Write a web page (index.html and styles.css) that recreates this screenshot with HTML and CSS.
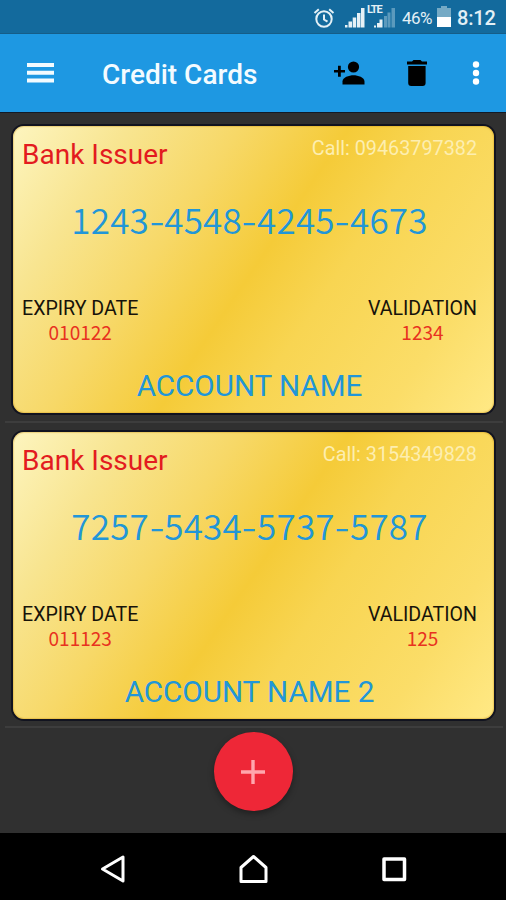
FILE: index.html
```html
<!DOCTYPE html>
<html lang="en">
<head>
    <meta charset="UTF-8">
    <meta name="viewport" content="width=device-width, initial-scale=1.0">
    <title>Credit Cards</title>
    <link rel="stylesheet" href="styles.css">
</head>
<body>
    <div class="status-bar">
        <svg class="alarm-icon" width="22" height="22" viewBox="0 0 22 22" fill="none" stroke="#e3f0f6" stroke-width="2">
            <circle cx="11" cy="12" r="7.7"/>
            <path d="M11 7.5v5l3.5 2.2M1.5 6l4.3-3.8M20.500 6l-4.300-3.800"/>
        </svg>
        <svg class="signal-icon" width="20" height="21" viewBox="0 0 20 21" fill="#e6f1f6">
            <path d="M0 18h2.500v2.500H0zM3.500 14.500H7v6H3.500zM7.700 10.500h3.500v10H7.700zM12 6h3.500v14.500H12zM16 1h3.500v19.500H16z"/>
        </svg>
        <div class="lte">
            <svg width="21" height="20" viewBox="0 0 21 20">
                <path fill="#e6f1f6" d="M0 17.500h2v2H0zM3 15h2.500v4.500H3zM5.500 11.500h3v8h-3z"/>
                <path fill="#5b9abd" d="M10 8h3v11.500h-3zM13.500 4.500h3v15h-3zM17.500 0H21v19.500h-3.500z"/>
            </svg>
            <span class="lte-label">LTE</span>
        </div>
        <span class="battery-text">46%</span>
        <svg class="battery-icon" width="14" height="21" viewBox="0 0 14 21">
            <path fill="#75aac5" d="M4 0h6v2h4v9H0V2h4z"/>
            <path fill="#fff" d="M0 11h14v10H0z"/>
        </svg>
        <span class="clock">8:12</span>
    </div>

    <header class="toolbar">
        <svg class="menu-icon" width="27" height="20" viewBox="0 0 27 20" fill="#f3fbff">
            <path d="M0 0h27v4H0zM0 7.800h27v4H0zM0 15.500h27v4H0z"/>
        </svg>
        <h1 class="title">Credit Cards</h1>
        <svg class="add-person-icon" width="31" height="24" viewBox="0 0 31 24">
            <circle cx="19.500" cy="6" r="5.600"/>
            <path d="M8.500 23.500v-3c0-4 6.500-6.200 11-6.200s11 2.200 11 6.200v3z"/>
            <path d="M4 4.800h2.800v4.100H11v2.700H6.800v4.200H4v-4.200H0V8.900h4z"/>
        </svg>
        <svg class="trash-icon" width="20" height="26" viewBox="0 0 20 26">
            <path d="M0 1.500h5L6.500 0h7L15 1.500h5v3H0zM1.200 6h17.400v17q0 3-3 3H4.200q-3 0-3-3z"/>
        </svg>
        <svg class="more-icon" width="8" height="24" viewBox="0 0 8 24" fill="#fff">
            <circle cx="4" cy="3.500" r="3.200"/>
            <circle cx="4" cy="12" r="3.200"/>
            <circle cx="4" cy="20.500" r="3.200"/>
        </svg>
    </header>

    <main class="card-list">
        <div class="list-item">
            <div class="credit-card">
                <div class="card-header">
                    <span class="issuer">Bank Issuer</span>
                    <span class="call">Call: 09463797382</span>
                </div>
                <div class="card-number">1243<i>-</i>4548<i>-</i>4245<i>-</i>4673</div>
                <div class="card-details">
                    <div class="detail">
                        <span class="label">EXPIRY DATE</span>
                        <span class="code">010122</span>
                    </div>
                    <div class="detail">
                        <span class="label">VALIDATION</span>
                        <span class="code">1234</span>
                    </div>
                </div>
                <div class="account-name">ACCOUNT NAME</div>
            </div>
        </div>

        <div class="list-item">
            <div class="credit-card">
                <div class="card-header">
                    <span class="issuer">Bank Issuer</span>
                    <span class="call">Call: 3154349828</span>
                </div>
                <div class="card-number">7257<i>-</i>5434<i>-</i>5737<i>-</i>5787</div>
                <div class="card-details">
                    <div class="detail">
                        <span class="label">EXPIRY DATE</span>
                        <span class="code">011123</span>
                    </div>
                    <div class="detail">
                        <span class="label">VALIDATION</span>
                        <span class="code">125</span>
                    </div>
                </div>
                <div class="account-name">ACCOUNT NAME 2</div>
            </div>
        </div>

        <button class="add-button" aria-label="Add card">
            <svg width="24" height="24" viewBox="0 0 24 24" fill="#ffa6ad">
                <path d="M10.300 0h3.400v10.300H24v3.400H13.700V24h-3.400V13.700H0v-3.400h10.300z"/>
            </svg>
        </button>
    </main>

    <nav class="nav-bar">
        <svg width="28" height="30" viewBox="0 0 28 30" fill="none" stroke="#fff" stroke-width="3" stroke-linejoin="round">
            <path d="M24 3v24L3.500 15z"/>
        </svg>
        <svg width="30" height="30" viewBox="0 0 30 30" fill="none" stroke="#fff" stroke-width="3" stroke-linejoin="round">
            <path d="M14.500 2.500L27 13.500V27.500H2V13.500z"/>
        </svg>
        <svg width="28" height="30" viewBox="0 0 28 30" fill="none" stroke="#fff" stroke-width="3.500" stroke-linejoin="round">
            <path d="M4 5h20.500v20.500H4z"/>
        </svg>
    </nav>
</body>
</html>
```

FILE: styles.css
```css
* {
    box-sizing: border-box;
}

body {
    margin: 0;
    height: 900px;
    display: flex;
    flex-direction: column;
    overflow: hidden;
    font-family: Roboto, sans-serif;
    background-color: #303030;
}

svg {
    display: block;
    flex-shrink: 0;
}

/* Status bar */
.status-bar {
    display: flex;
    align-items: center;
    justify-content: flex-end;
    height: 34px;
    padding-right: 11px;
    background-color: #136a9d;
    border-bottom: 1px solid #155d88;
    color: #e3f0f6;
}

.alarm-icon {
    margin: 2px 10px 0 0;
}

.signal-icon {
    margin: 2px 9px 0 0;
}

.lte {
    position: relative;
    margin: 3px 7px 0 0;
}

.lte-label {
    position: absolute;
    top: -4px;
    left: -7px;
    font-size: 11px;
    font-weight: 700;
    line-height: 12px;
    letter-spacing: -1px;
}

.battery-text {
    width: 31px;
    font-size: 17px;
    letter-spacing: -0.5px;
    margin: 2px 4px 0 0;
}

.battery-icon {
    margin-right: 6px;
}

.clock {
    width: 38px;
    font-size: 20px;
    font-weight: 500;
    letter-spacing: -0.2px;
    white-space: nowrap;
    margin-top: 2px;
}

/* Toolbar */
.toolbar {
    display: flex;
    align-items: center;
    height: 79px;
    padding: 0 26px 0 27px;
    background-color: #1e98e2;
    border-bottom: 1px solid #131a26;
}

.menu-icon {
    margin-right: 48px;
}

.title {
    flex: 1;
    margin: 4px 0 0;
    font-size: 28px;
    font-weight: 500;
    line-height: 34px;
    color: #f3fbff;
}

.add-person-icon {
    margin-right: 42px;
}

.trash-icon {
    margin-right: 45px;
}

/* Card list */
.card-list {
    flex: 1;
    display: flex;
    flex-direction: column;
    align-items: center;
    padding: 4px 3px 0 5px;
}

.list-item {
    align-self: stretch;
    height: 305.5px;
    padding: 9px 9px 0 8px;
    border-bottom: 2px solid #3d3d3d;
}

.credit-card {
    height: 287px;
    padding: 10px 17px 0 9px;
    border-radius: 11px;
    background: linear-gradient(124deg, #fdf5bf 0%, #f8e591 17%, #f7d867 34%, #f5cb38 50%, #f8d552 63%, #fbdd68 84%, #ffe985 100%);
    box-shadow: 0 0 0 2px #11131f, inset 0 0 1px 1px rgba(205, 150, 20, 0.35);
}

.card-header {
    display: flex;
    justify-content: space-between;
    height: 34px;
}

.issuer {
    margin-top: 3px;
    font-size: 28px;
    line-height: 32px;
    color: #e31b20;
}

.call {
    margin-top: 1px;
    font-size: 19.8px;
    line-height: 24px;
    color: #fdeeb0;
}

.card-number {
    margin-top: 29px;
    font-family: "Noto Sans CJK SC", sans-serif;
    font-size: 35px;
    font-weight: 350;
    line-height: 40px;
    letter-spacing: 0.2px;
    text-align: center;
    white-space: nowrap;
    color: #2196d8;
}

/* wider dash between the digit groups */
.card-number i {
    display: inline-block;
    font-style: normal;
    margin: 0 1.5px;
    transform: scaleX(1.25);
}

.card-details {
    display: flex;
    justify-content: space-between;
    margin-top: 58px;
}

.detail {
    display: flex;
    flex-direction: column;
    align-items: center;
}

.label {
    font-size: 19.6px;
    line-height: 24px;
    color: #17130a;
}

.code {
    font-family: "Noto Sans CJK SC", sans-serif;
    font-size: 19px;
    line-height: 24px;
    margin-top: -1px;
    color: #e8321f;
}

.account-name {
    margin-top: 24px;
    font-size: 29.6px;
    line-height: 36px;
    text-align: center;
    color: #2196d8;
}

.add-button {
    display: flex;
    align-items: center;
    justify-content: center;
    width: 79px;
    height: 79px;
    margin: 4px 2px 0 0;
    padding: 0;
    border: none;
    border-radius: 50%;
    background-color: #ee2737;
    box-shadow: 0 3px 6px rgba(0, 0, 0, 0.35);
    cursor: pointer;
}

/* Android navigation */
.nav-bar {
    display: flex;
    align-items: center;
    justify-content: space-between;
    height: 67px;
    padding: 4px 98px 0 99px;
    background-color: #000;
}
```
